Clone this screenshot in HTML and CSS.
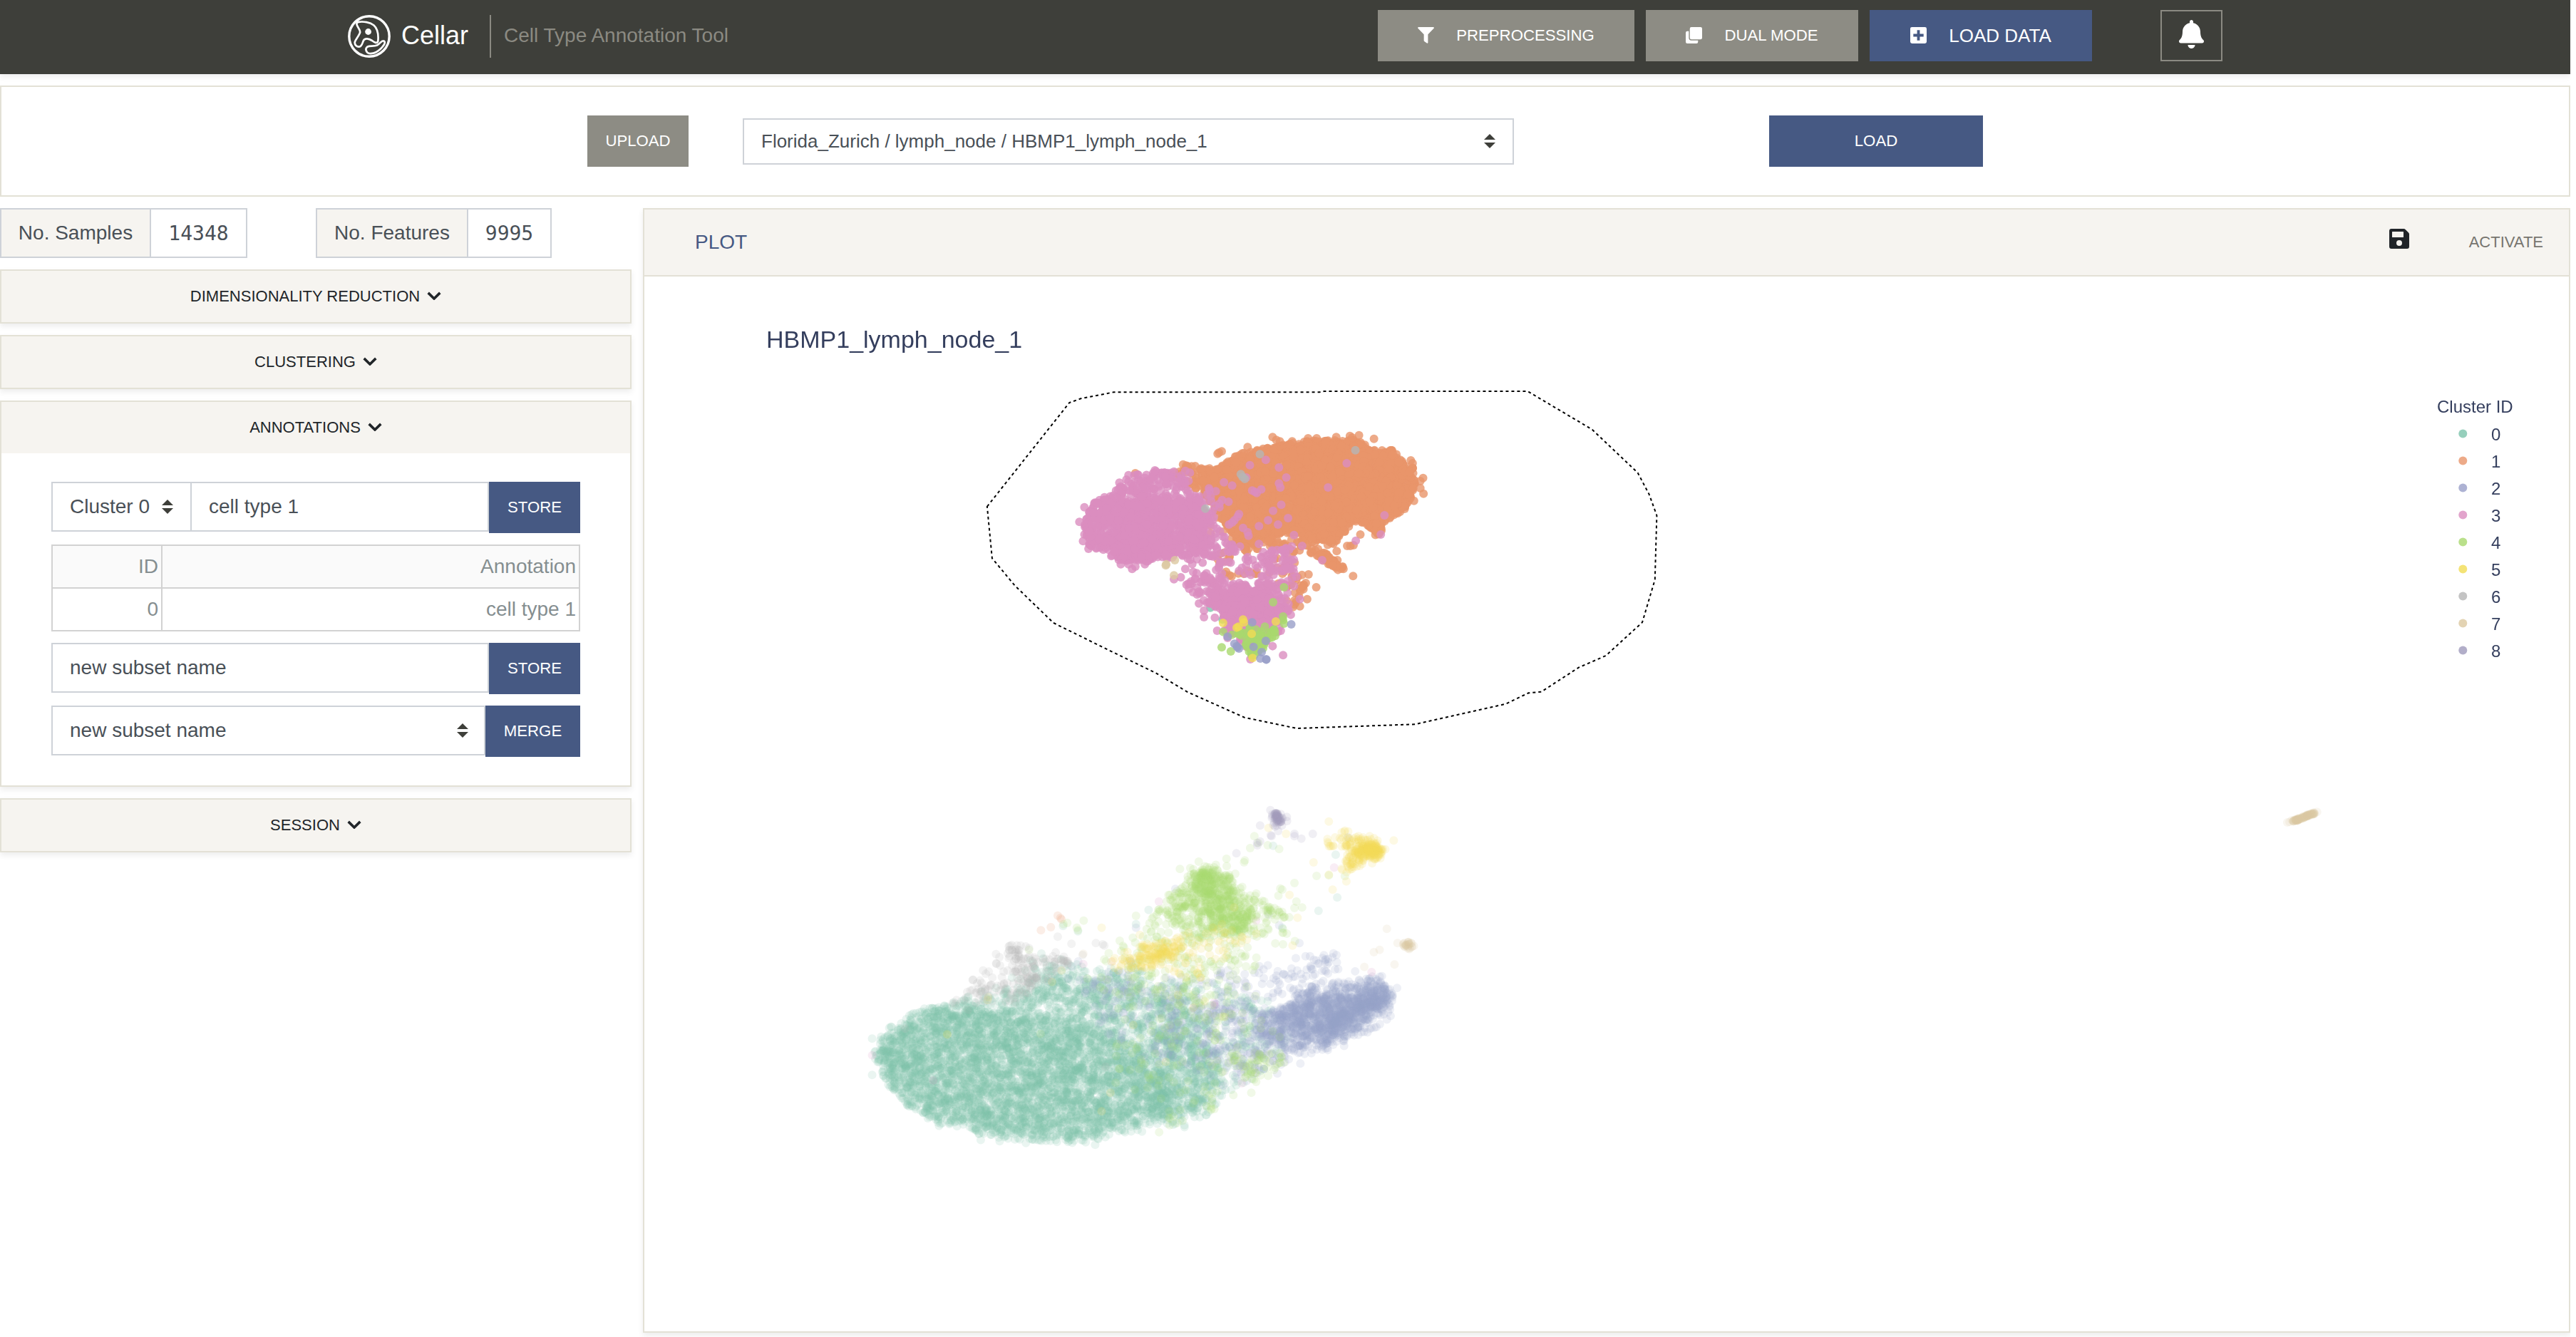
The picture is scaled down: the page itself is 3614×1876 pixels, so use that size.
FILE: index.html
```html
<!DOCTYPE html>
<html lang="en">
<head>
<meta charset="utf-8">
<title>Cellar</title>
<link rel="stylesheet" href="styles.css">
</head>
<body>
<svg class="defs" width="0" height="0" aria-hidden="true">
  <symbol id="chevron" viewBox="0 0 20 12"><path d="M1.7 1.9 L10 10 L18.3 1.9" fill="none" stroke="currentColor" stroke-width="3.6"/></symbol>
  <symbol id="arrows" viewBox="0 0 16 20"><path d="M0 8 L8 0 L16 8 Z M0 12 L16 12 L8 20 Z" fill="currentColor"/></symbol>
</svg>

<header class="topbar">
  <div class="brand">
    <svg class="logo" viewBox="0 0 60 60" fill="none" stroke="#fff">
      <circle cx="30" cy="30" r="28.2" stroke-width="3.4"/>
      <path stroke-width="2.7" stroke-linejoin="round" d="M15 9.8 C22 8.8 31 10.2 36.5 14.5 C42 19.5 43.2 28 42.3 37 C41 40.5 37.5 38.7 34 36 C29 32.8 24.2 32.3 22.2 35.5 C20.3 39 20 43.5 16.5 44.5 C12.5 45 9.3 42 9.8 38 C10.8 34 16.2 29 17.2 24 C17 19.5 12.2 16 12.4 12.3 C12.7 10.8 13.6 10 15 9.8 Z"/>
      <circle cx="28.6" cy="23.5" r="4.4" fill="#fff" stroke="none"/>
      <path stroke-width="2.7" stroke-linejoin="round" d="M49.8 36.3 C46.5 36.2 45.3 40.6 41 42.5 C36.5 44.5 31 42.8 27.2 44.7 C23.8 47.4 25.5 52.8 30 54 C36 54.8 42 51.5 46.5 47 C49.2 44 52.2 41.5 51.8 38.2 C51.5 36.8 50.8 36.3 49.8 36.3 Z"/>
    </svg>
    <span class="name">Cellar</span>
    <span class="tagline">Cell Type Annotation Tool</span>
  </div>
  <nav class="actions">
    <button class="btn muted pre"><svg class="icon" viewBox="0 0 24 24"><path fill="#fff" d="M1 0 H23 Q24.4 .6 23.6 1.8 L15 10.6 V23 Q14.5 24.2 13.4 23.6 L9.6 20.8 Q9 20.4 9 19.6 V10.6 L.4 1.8 Q-.4 .6 1 0 Z"/></svg>PREPROCESSING</button>
    <button class="btn muted dual"><svg class="icon" viewBox="0 0 24 24"><path fill="#fff" d="M8.3 0 H21.7 Q24 0 24 2.3 V15.7 Q24 18 21.7 18 H8.3 Q6 18 6 15.7 V2.3 Q6 0 8.3 0 Z M4.5 6 V15.7 Q4.5 19.5 8.3 19.5 H18 V21.7 Q18 24 15.7 24 H2.3 Q0 24 0 21.7 V8.3 Q0 6 2.3 6 Z"/></svg>DUAL MODE</button>
    <button class="btn primary data"><svg class="icon" viewBox="0 0 24 24"><path fill="#fff" fill-rule="evenodd" d="M2.6 0 H21.4 Q24 0 24 2.6 V21.4 Q24 24 21.4 24 H2.6 Q0 24 0 21.4 V2.6 Q0 0 2.6 0 Z M10 4.5 V10 H4.5 V14 H10 V19.5 H14 V14 H19.5 V10 H14 V4.5 Z"/></svg>LOAD DATA</button>
  </nav>
  <button class="bell" aria-label="Notifications"><svg width="35" height="40" viewBox="0 0 448 512"><path fill="#fff" d="M224 512c35.320 0 63.970-28.650 63.970-64H160.030c0 35.350 28.650 64 63.970 64zm215.390-149.710c-19.320-20.760-55.470-51.990-55.470-154.290 0-77.700-54.480-139.900-127.940-155.160V32c0-17.670-14.320-32-31.980-32s-31.980 14.330-31.980 32v20.840C118.560 68.100 64.080 130.300 64.080 208c0 102.300-36.150 133.530-55.470 154.290-6 6.450-8.660 14.160-8.610 21.710.11 16.400 12.980 32 32.100 32h383.800c19.120 0 32-15.600 32.100-32 .05-7.550-2.610-15.270-8.610-21.710z"/></svg></button>
</header>

<section class="loader">
  <button class="btn muted upload">UPLOAD</button>
  <div class="field dataset"><span>Florida_Zurich / lymph_node / HBMP1_lymph_node_1</span><svg class="arrows"><use href="#arrows"/></svg></div>
  <button class="btn primary load">LOAD</button>
</section>

<main class="workspace">
  <aside class="side">
    <div class="stats">
      <div class="stat first"><span class="label samples">No. Samples</span><span class="value">14348</span></div>
      <div class="stat second"><span class="label features">No. Features</span><span class="value">9995</span></div>
    </div>

    <section class="panel"><h2>DIMENSIONALITY REDUCTION<svg class="chev"><use href="#chevron"/></svg></h2></section>
    <section class="panel"><h2>CLUSTERING<svg class="chev"><use href="#chevron"/></svg></h2></section>
    <section class="panel">
      <h2>ANNOTATIONS<svg class="chev"><use href="#chevron"/></svg></h2>
      <div class="form">
        <div class="row">
          <div class="field cluster"><span>Cluster 0</span><svg class="arrows"><use href="#arrows"/></svg></div>
          <div class="field grow joined"><span>cell type 1</span></div>
          <button class="btn primary store">STORE</button>
        </div>
        <table class="labels">
          <tr><th>ID</th><th>Annotation</th></tr>
          <tr><td>0</td><td>cell type 1</td></tr>
        </table>
        <div class="row">
          <div class="field grow"><span>new subset name</span></div>
          <button class="btn primary store">STORE</button>
        </div>
        <div class="row">
          <div class="field grow subset"><span>new subset name</span><svg class="arrows"><use href="#arrows"/></svg></div>
          <button class="btn primary merge">MERGE</button>
        </div>
      </div>
    </section>
    <section class="panel"><h2>SESSION<svg class="chev"><use href="#chevron"/></svg></h2></section>
  </aside>

  <section class="plot">
    <div class="plot-head">
      <span class="plot-name">PLOT</span>
      <svg class="save" width="28" height="28" viewBox="0 0 28 28"><path fill="#212529" fill-rule="evenodd" d="M3 0 H20.500 Q21.700 0 22.600 .9 L27.100 5.400 Q28 6.300 28 7.500 V25 Q28 28 25 28 H3 Q0 28 0 25 V3 Q0 0 3 0 Z M4 4.600 V11.400 Q4 12 4.600 12 H19.400 Q20 12 20 11.400 V4.600 Q20 4 19.400 4 H4.600 Q4 4 4 4.600 Z M14 16 A4 4 0 1 0 14 24 A4 4 0 1 0 14 16 Z"/></svg>
      <span class="activate">ACTIVATE</span>
    </div>
    <div class="plot-body">
      <canvas id="points" width="2700" height="1480"></canvas>
      <svg class="overlay" width="2700" height="1480" viewBox="0 0 2700 1480">
        <text class="title" x="171" y="100">HBMP1_lymph_node_1</text>
        <path class="lasso" d="M480.900 322.700 L596.300 177 L612.300 171.300 L658.200 162.300 L947 162.300 L953.500 161 L1239.200 161 L1329.800 214.700 L1393.600 275.300 L1409.500 305.300 L1420.400 335.300 L1417.800 425.300 L1400 485.300 L1348.900 532 L1310.700 548.700 L1258.400 582.700 L1240.500 584.300 L1208.600 599.700 L1081 628.300 L915.200 634 L841.900 618.700 L762.100 583 L717.500 556.300 L653.700 525.300 L574 486 L519.800 433.700 L487.900 395.300 Z"/>
        <text class="legend" x="2515" y="191">Cluster ID</text>
        <g id="legend" class="legend"></g>
      </svg>
    </div>
  </section>
</main>
<script src="plot.js"></script>
</body>
</html>
```
FILE: styles.css
```css
* { box-sizing: border-box; }
body {
  margin: 0;
  width: 3606px;
  height: 1876px;
  overflow: hidden;
  background: #fff;
  font-family: "Liberation Sans", Arial, sans-serif;
  font-size: 28px;
  color: #495057;
}
button, h2 { font: inherit; margin: 0; }
.defs { position: absolute; }

.topbar {
  display: flex;
  align-items: center;
  height: 104px;
  padding: 0 488px 4px;
  background: #3e3f3a;
  box-shadow: 0 4px 8px rgba(0, 0, 0, .075);
}
.brand { display: flex; align-items: center; width: 1445px; padding-top: 2px; }
.logo { width: 60px; height: 60px; }
.name { margin-left: 15px; width: 124px; font-size: 36px; color: #fff; line-height: 60px; padding-bottom: 2px; }
.tagline { height: 60px; line-height: 58px; padding-left: 18px; border-left: 2px solid #8b8a82; color: #8b8a82; }
.actions { display: flex; gap: 16px; }
.btn {
  display: flex;
  align-items: center;
  justify-content: center;
  flex: none;
  height: 72px;
  padding: 0;
  border: 0;
  color: #fff;
  font-size: 22.200px;
}
.muted { background: #8d8c84; }
.primary { background: #465983; }
.icon { width: 23px; height: 23px; margin: -2px 31px 0 0; }
.pre { width: 360px; }
.dual { width: 298px; }
.data { width: 312px; font-size: 26px; }
.bell {
  display: flex;
  align-items: center;
  justify-content: center;
  width: 87px;
  height: 72px;
  margin-left: 96px;
  padding: 0 0 4px;
  border: 2px solid #8b8a82;
  background: none;
}

.loader {
  display: flex;
  align-items: center;
  height: 156px;
  margin-top: 16px;
  padding-left: 822px;
  border: 2px solid #e3e1d6;
}
.upload { width: 142px; }
.field {
  display: flex;
  align-items: center;
  justify-content: space-between;
  height: 70px;
  padding: 0 24px;
  border: 2px solid #ced2d8;
  background: #fff;
}
.arrows { width: 16px; height: 20px; color: #3e3f3a; }
.dataset { width: 1082px; height: 65px; margin-left: 76px; font-size: 26px; }
.load { width: 300px; margin-left: 358px; }

.workspace { display: flex; align-items: flex-start; gap: 16px; margin-top: 16px; }
.side { display: flex; flex-direction: column; gap: 16px; width: 886px; }
.stats { display: flex; }
.stat { display: flex; height: 70px; border: 2px solid #ced2d8; }
.first { width: 347px; }
.second { width: 331px; margin-left: 96px; }
.label, .value { display: flex; align-items: center; justify-content: center; }
.label { background: #f6f4f0; border-right: 2px solid #ced2d8; }
.samples { width: 210px; }
.features { width: 212px; }
.value { flex: 1; font-family: "DejaVu Sans Mono", monospace; }
.panel { border: 2px solid #e3e1d6; box-shadow: 0 4px 8px rgba(0, 0, 0, .075); }
.panel h2 {
  display: flex;
  align-items: center;
  justify-content: center;
  height: 72px;
  background: #f6f4f0;
  color: #212529;
  font-size: 22px;
}
.chev { width: 20px; height: 12px; margin: -3px 0 0 10px; }
.form { display: flex; flex-direction: column; gap: 16px; padding: 40px 70px; }
.row { display: flex; align-items: flex-start; }
.cluster { width: 197px; }
.grow { flex: 1; }
.joined { border-left: 0; padding-left: 24px; }
.subset { padding-right: 22px; }
.store { width: 128px; }
.merge { width: 133px; }
.labels { width: 742px; border-collapse: collapse; table-layout: fixed; color: #858e90; }
.labels th, .labels td { height: 60px; padding: 0 4px; border: 2px solid #d2d2d2; font-weight: 400; text-align: right; }
.labels th:first-child { width: 154px; }
.labels th { background: #fafafa; }

.plot { width: 2704px; border: 2px solid #e3e1d6; box-shadow: 0 4px 8px rgba(0, 0, 0, .075); }
.plot-head { display: flex; align-items: center; height: 94px; padding: 0 36px 0 71px; background: #f6f4f0; border-bottom: 2px solid #e3e1d6; }
.plot-name { flex: 1; color: #465983; }
.save { margin: -10px 84px 0 0; }
.activate { font-size: 22px; color: #77756f; }
.plot-body { position: relative; height: 1480px; }
#points { display: block; }
.overlay { position: absolute; inset: 0; }
.title { font-size: 34px; fill: #343e5d; }
.legend { font-size: 24px; fill: #343e5d; }
.lasso { fill: none; stroke: #000; stroke-width: 2; stroke-dasharray: 4 4; }
```
FILE: plot.js
```js
var COLORS = ['#7cc3ab', '#e8956a', '#989fc8', '#db8dbf', '#a9d86e', '#f1dc54', '#b5b5b5', '#dcc8a0', '#9f9abb'];
var canvas = document.getElementById('points');
var ctx = canvas.getContext('2d');

// Fixed seed, so that every load draws the same scatter.
var seed = 20211;
function rnd() {
  seed = (seed + 0x6D2B79F5) | 0;
  var t = Math.imul(seed ^ (seed >>> 15), 1 | seed);
  t = (t + Math.imul(t ^ (t >>> 7), 61 | t)) ^ t;
  return ((t ^ (t >>> 14)) >>> 0) / 4294967296;
}
function gauss() {
  return Math.sqrt(-2 * Math.log(1 - rnd())) * Math.cos(2 * Math.PI * rnd());
}

// Each view maps its data units to canvas pixels.
var SELECTED = { x: 456, y: 132, kx: 0.6378, ky: 0.3333, alpha: 0.8 };
var REST = { x: 296, y: 722, kx: 0.5357, ky: 0.3333, alpha: 0.16 };
var view;

function dot(u, v, c) {
  ctx.globalAlpha = view.alpha;
  ctx.fillStyle = COLORS[c];
  ctx.beginPath();
  ctx.arc(view.x + u * view.kx, view.y + v * view.ky, 6, 0, 2 * Math.PI);
  ctx.fill();
}
function inside(p, x, y) {
  var hit = false;
  for (var i = 0, j = p.length - 2; i < p.length; j = i, i += 2) {
    if ((p[i + 1] > y) !== (p[j + 1] > y) &&
        x < (p[j] - p[i]) * (y - p[i + 1]) / (p[j + 1] - p[i + 1]) + p[i]) hit = !hit;
  }
  return hit;
}
// n points spread evenly over polygon p; soft is the jitter past its edge.
function region(c, n, p, soft) {
  var x0 = 1e9, x1 = -1e9, y0 = 1e9, y1 = -1e9;
  soft = soft || 0;
  for (var i = 0; i < p.length; i += 2) {
    x0 = Math.min(x0, p[i]); x1 = Math.max(x1, p[i]);
    y0 = Math.min(y0, p[i + 1]); y1 = Math.max(y1, p[i + 1]);
  }
  while (n > 0) {
    var x = x0 + rnd() * (x1 - x0), y = y0 + rnd() * (y1 - y0);
    if (inside(p, x, y)) { dot(x + gauss() * soft, y + gauss() * soft * 1.6, c); n--; }
  }
}
function cloud(c, n, x, y, sx, sy) {
  for (; n > 0; n--) dot(x + gauss() * sx, y + gauss() * sy, c);
}
function streak(c, n, x0, y0, x1, y1, s) {
  for (; n > 0; n--) {
    var t = rnd();
    dot(x0 + (x1 - x0) * t + gauss() * s, y0 + (y1 - y0) * t + gauss() * s, c);
  }
}
function list(c, p) {
  for (var i = 0; i < p.length; i += 2) dot(p[i], p[i + 1], c);
}

view = REST;
region(0, 4300, [60,1110, 85,1060, 115,1010, 150,970, 210,930, 280,915, 380,920, 480,950, 580,980, 680,1020, 750,1080, 790,1150, 810,1230, 820,1310, 800,1370, 760,1405, 700,1420, 640,1450, 550,1465, 480,1455, 370,1445, 280,1415, 200,1370, 145,1315, 105,1250, 80,1180], 10);
region(0, 560, [760,1020, 850,1020, 910,1080, 950,1160, 955,1250, 925,1330, 860,1380, 800,1405, 780,1300, 790,1180], 14);
region(0, 750, [240,910, 330,870, 440,830, 540,790, 640,800, 740,820, 850,870, 930,970, 890,1060, 760,1040, 640,990, 500,950, 300,930], 14);
region(0, 90, [400,800, 500,730, 620,750, 760,740, 780,820, 500,820], 12);
region(0, 240, [740,800, 900,780, 1040,860, 1110,960, 1130,1080, 1080,1180, 960,1280, 900,1100], 10);
region(0, 150, [52,1190, 48,1110, 64,1040, 110,960, 220,890, 260,910, 100,1060, 110,1270, 220,1390, 380,1455, 560,1475, 700,1435, 640,1470, 550,1480, 380,1462, 220,1400, 120,1312]);
cloud(0, 20, 530, 750, 40, 30);
list(0, [768,500, 1213,504, 1262,448, 1094,230, 1118,575, 1258,268, 735,560, 583,590, 544,568, 44,1042, 66,1048, 44,1195, 832,1405, 862,1415]);
list(1, [530,524, 540,540, 537,534, 512,573, 486,586, 885,912, 671,718]);
region(2, 780, [1040,950, 1130,900, 1170,830, 1280,820, 1350,782, 1400,820, 1412,860, 1392,930, 1335,1005, 1260,1060, 1180,1085, 1100,1070, 1050,1040], 9);
region(2, 380, [1090,950, 1210,870, 1320,850, 1395,820, 1410,860, 1360,930, 1280,990, 1230,1050, 1180,1000], 7);
region(2, 150, [1230,960, 1340,860, 1398,830, 1405,870, 1300,960, 1250,1030], 6);
region(2, 400, [780,800, 950,760, 1060,740, 1200,730, 1300,750, 1390,800, 1370,980, 1260,1080, 1160,1140, 1080,1190, 950,1240, 860,1150, 790,980], 8);
region(2, 110, [900,900, 1060,860, 1120,1100, 1060,1180, 930,1130], 8);
region(2, 110, [540,700, 700,760, 860,900, 840,1150, 640,1000], 10);
region(2, 22, [1150,700, 1260,680, 1300,740, 1220,780]);
list(2, [718,715, 722,720, 735,575, 838,412, 1082,520, 1110,565, 1163,640, 1290,195, 1232,708, 1230,712, 1260,690]);
list(3, [44,1112, 1254,322, 1352,762, 597,728, 1050,545, 1012,1230, 940,890, 941,902, 204,1218, 795,465]);
region(4, 420, [888,330, 978,345, 1005,400, 1045,480, 1045,540, 1025,600, 960,610, 850,585, 805,515, 835,440, 870,380], 7);
region(4, 190, [890,330, 950,330, 980,360, 995,440, 1000,520, 960,560, 900,500, 868,420], 6);
cloud(4, 60, 925, 360, 22, 26);
cloud(4, 35, 1015, 550, 18, 28);
region(4, 170, [750,560, 820,430, 1060,430, 1120,520, 1040,640, 1030,720, 930,760, 850,700, 640,720, 690,630, 760,600]);
region(4, 190, [600,780, 860,700, 1090,700, 1060,950, 1140,1030, 1130,1140, 1040,1230, 860,1330, 660,1220, 700,950]);
region(4, 50, [700,700, 860,680, 960,820, 900,940, 740,850]);
region(4, 45, [980,1110, 1130,1100, 1130,1150, 1040,1240, 1010,1200]);
cloud(4, 9, 825, 1390, 18, 20);
cloud(4, 7, 925, 1330, 14, 12);
streak(4, 15, 1060, 460, 1130, 530, 8);
streak(4, 8, 1090, 590, 1160, 610, 22);
list(4, [850,328, 972,285, 1018,300, 1020,292, 1045,190, 1034,240, 1055,218, 1080,228, 1110,244, 1150,387, 1208,357, 1240,355, 1282,358, 1118,415, 1108,440, 1113,410, 1155,465, 1170,490, 1150,492, 1120,645, 555,555, 598,545, 580,575, 583,585, 545,560, 240,1022, 485,1022, 735,525, 990,1280, 1037,1270, 455,668]);
region(5, 75, [745,650, 860,632, 845,690, 820,730, 745,745, 700,730], 8);
region(5, 40, [755,690, 790,660, 845,645, 835,690, 790,715, 745,735], 5);
region(5, 100, [650,700, 760,650, 860,600, 960,560, 1050,640, 980,700, 900,790, 680,760]);
cloud(5, 120, 1347, 250, 17, 16);
region(5, 130, [1265,200, 1315,182, 1370,225, 1380,280, 1330,310, 1303,340, 1268,330, 1300,265], 6);
region(5, 16, [1235,200, 1290,160, 1300,240, 1240,240]);
list(5, [1240,128, 1082,155, 1128,180, 1410,208, 1286,380, 1200,300, 1240,352, 1250,415, 1137,437, 1158,533, 745,605, 645,575, 348,868, 346,880, 515,803, 540,755, 898,628, 992,490, 645,1348, 668,1270, 813,1140, 728,985, 241,1025, 1145,650, 845,858, 915,885, 965,950, 1050,600, 1320,290]);
region(6, 140, [385,660, 440,640, 490,700, 560,690, 570,730, 480,830, 420,880, 290,900, 255,890, 330,790], 8);
cloud(6, 18, 415, 680, 16, 24);
cloud(6, 14, 335, 825, 18, 24);
cloud(6, 14, 455, 790, 18, 26);
cloud(6, 10, 540, 715, 18, 10);
list(6, [265,880, 262,895, 530,613, 566,643, 630,640, 648,645, 652,650, 750,845, 655,1160, 130,1000, 595,690]);
cloud(7, 26, 1446, 648, 8, 7);
list(7, [1392,580, 1358,678, 1373,668, 1412,730, 1333,740, 1420,640, 597,685]);
streak(7, 90, 3764, 128, 3822, 92, 1.8);
list(7, [3750,132, 3756,130, 3828,88]);
streak(8, 40, 1100, 90, 1110, 132, 3);
cloud(8, 22, 1110, 122, 13, 22);
list(8, [1060,145, 1060,212, 1052,218, 1088,186, 1090,190, 1150,190, 1168,200, 1198,180, 998,262, 1150,180, 1053,228, 1087,80]);

view = SELECTED;
list(0, [530,998, 557,1048]);
region(1, 3200, [550,410, 590,350, 620,340, 690,312, 750,295, 850,292, 895,330, 935,335, 950,380, 975,405, 982,470, 972,530, 960,580, 910,640, 900,690, 872,650, 845,640, 820,690, 780,720, 740,700, 690,680, 640,720, 600,745, 570,660, 545,600, 515,520, 515,440]);
region(1, 70, [600,720, 690,700, 820,680, 800,740, 760,775, 720,770, 640,750, 600,765]);
region(1, 60, [470,390, 550,410, 540,520, 500,500, 440,440]);
region(1, 14, [890,640, 912,650, 903,695, 885,690]);
streak(1, 45, 770, 770, 825, 845, 6);
region(1, 36, [665,780, 720,800, 742,870, 735,985, 705,990, 680,920]);
region(1, 30, [530,600, 600,640, 640,900, 560,860, 530,740]);
list(1, [667,280, 675,292, 683,298, 549,345, 546,350, 555,340, 365,432, 438,435, 837,275, 842,282, 857,272, 890,287, 998,452, 992,465, 999,518, 992,495, 971,378, 975,390, 978,548, 844,865, 763,912, 831,738, 838,738, 845,735, 743,962, 727,992, 712,995, 715,985, 746,858, 735,905, 552,770, 807,280, 745,285, 764,285, 710,298, 612,322, 470,395, 480,402, 510,412, 860,690, 808,760, 718,975, 610,842, 630,855, 660,850]);
region(3, 900, [250,640, 262,600, 275,550, 310,520, 330,560, 420,540, 505,560, 515,640, 520,720, 500,770, 440,790, 385,808, 330,800, 300,770, 262,735, 252,690]);
region(3, 210, [310,520, 350,445, 410,420, 480,440, 505,500, 510,620, 400,600, 330,560]);
region(3, 110, [480,560, 530,500, 540,640, 575,720, 590,760, 530,800, 480,760]);
region(3, 50, [440,780, 530,760, 620,790, 700,750, 715,850, 640,870, 560,900, 490,860]);
region(3, 240, [470,895, 500,850, 540,870, 610,900, 655,880, 695,900, 705,1000, 690,1050, 600,1060, 550,1030, 510,970]);
region(3, 240, [530,940, 600,900, 640,930, 680,970, 690,1050, 650,1080, 600,1075, 560,1040]);
region(3, 50, [640,760, 700,740, 725,840, 725,960, 690,960, 640,880]);
region(3, 75, [545,1060, 600,1040, 695,1040, 680,1110, 640,1170, 610,1170, 565,1110]);
list(3, [652,376, 617,398, 681,408, 697,450, 681,475, 684,492, 830,390, 789,492, 560,470, 578,484, 527,496, 542,508, 622,505, 632,515, 642,500, 628,510, 609,450, 686,565, 668,590, 593,604, 590,615, 583,630, 578,640, 571,648, 657,630, 637,655, 679,648, 701,621, 602,662, 612,680, 614,695, 637,730, 714,692, 709,740, 732,738, 913,609, 905,690, 850,716, 776,798, 570,552, 556,545, 550,560, 540,570, 550,575, 660,770, 595,740, 612,785, 552,805, 253,575, 242,637, 250,718, 262,750, 330,472, 408,420, 450,425, 350,440, 365,825, 358,835, 386,815, 475,835, 450,878, 465,870, 516,1038, 516,1010, 505,980, 690,1198, 667,1160, 685,1095, 727,962, 545,1095, 568,1125, 618,1215, 707,1028, 350,815, 333,815, 485,430, 475,422, 540,1040]);
region(4, 34, [605,1160, 620,1120, 665,1110, 655,1150, 635,1200, 612,1205]);
region(4, 22, [575,1100, 600,1080, 680,1090, 675,1130, 620,1140]);
list(4, [692,912, 668,975, 690,1035, 690,1050, 692,1065, 650,1078, 555,1165, 575,1182, 558,1100, 670,1090, 672,1100, 630,1090, 578,1112, 610,1135]);
list(5, [558,1062, 602,1048, 604,1060, 588,1082, 592,1078, 674,1056, 621,1108, 623,1210]);
list(2, [708,1068, 622,1060, 583,1150, 590,1165, 593,1170, 588,1160, 652,1138, 625,1163, 643,1185, 653,1217, 640,1212, 568,1120, 653,1215]);
list(6, [639,352, 849,335, 597,436, 601,448, 606,456, 519,581]);
list(7, [433,815, 432,820, 452,798, 450,862]);

// Legend entries, one row per cluster.
var NS = 'http://www.w3.org/2000/svg';
var legend = document.getElementById('legend');
COLORS.forEach(function (color, i) {
  var mark = document.createElementNS(NS, 'circle');
  mark.setAttribute('cx', 2551.300);
  mark.setAttribute('cy', 220.400 + i * 38);
  mark.setAttribute('r', 6);
  mark.setAttribute('fill', color);
  mark.setAttribute('fill-opacity', 0.8);
  var label = document.createElementNS(NS, 'text');
  label.setAttribute('x', 2591);
  label.setAttribute('y', 230 + i * 38);
  label.textContent = i;
  legend.append(mark, label);
});
```
